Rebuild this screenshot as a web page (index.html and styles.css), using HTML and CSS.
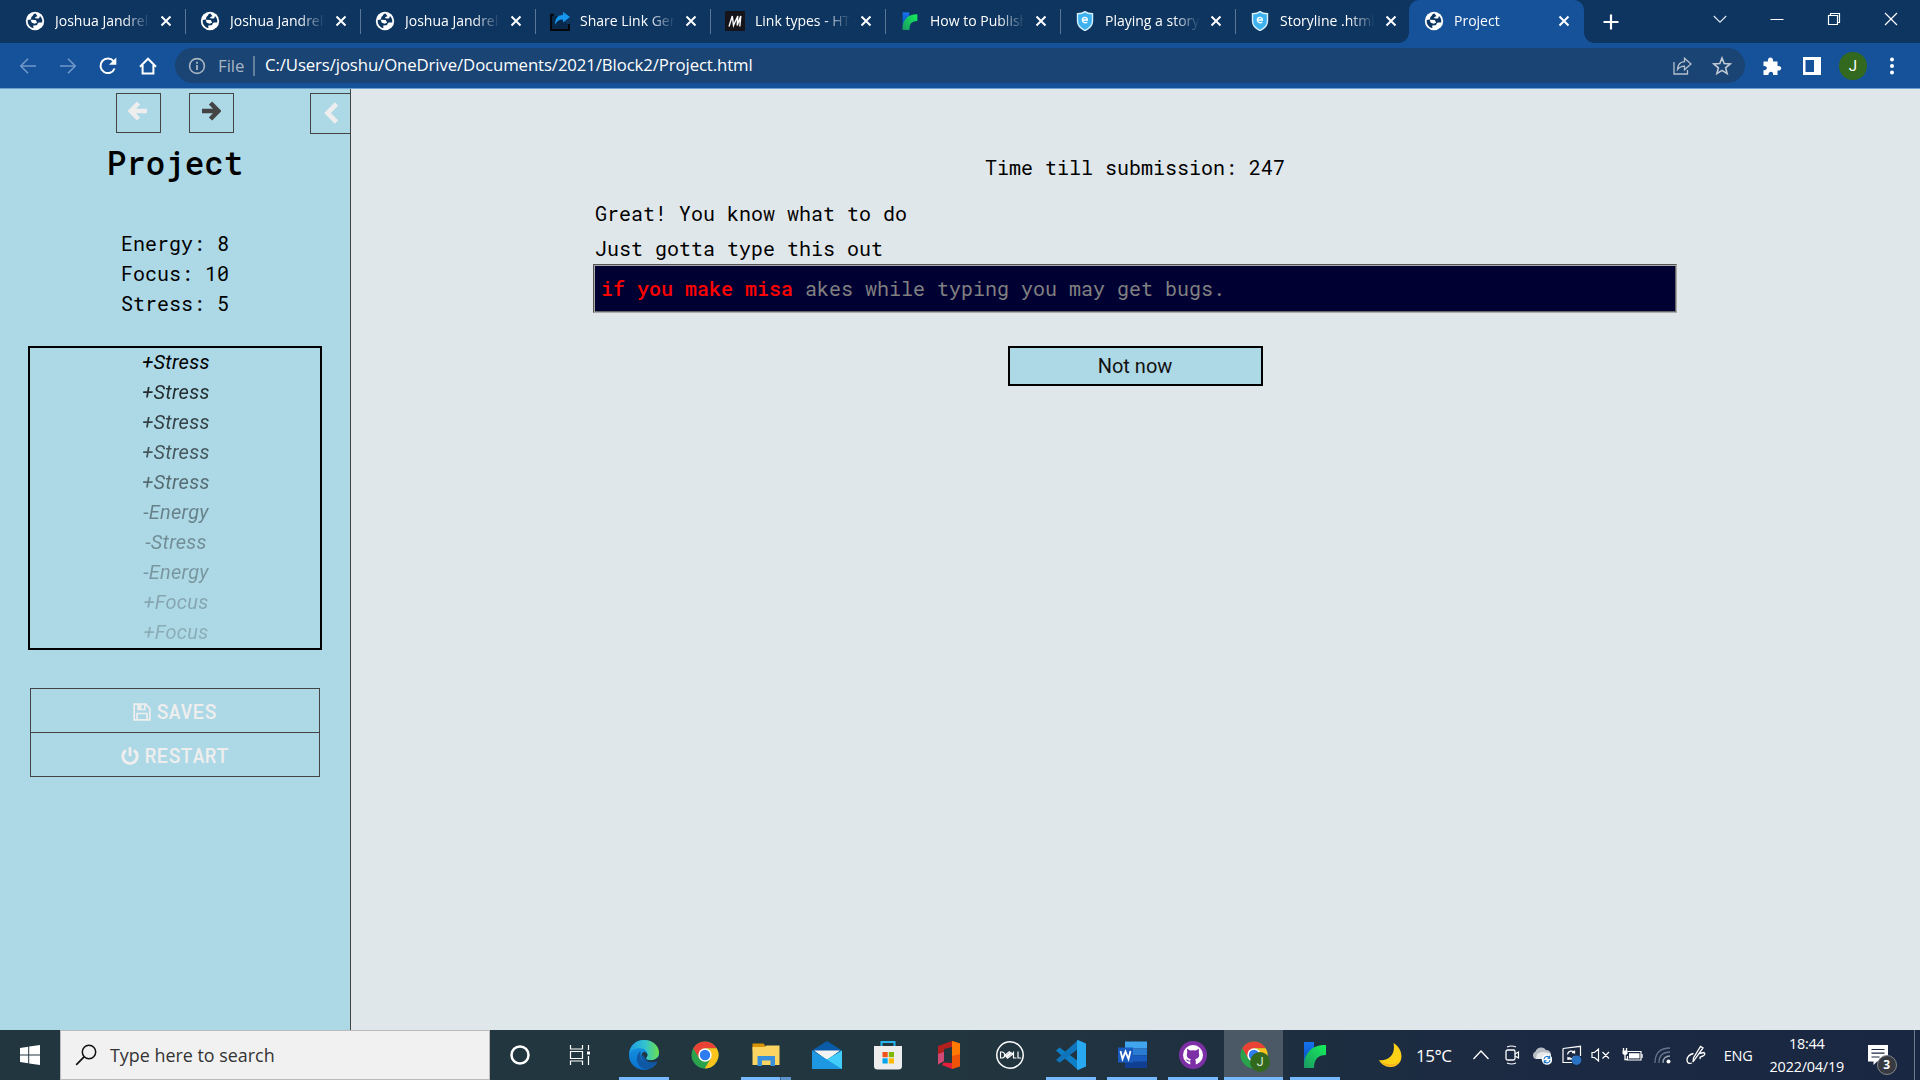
FILE: index.html
```html
<!DOCTYPE html>
<html lang="en">
<head>
<meta charset="utf-8">
<title>Project</title>
<link rel="stylesheet" href="styles.css">
</head>
<body>
<svg class="defs" aria-hidden="true">
  <symbol id="globe" viewBox="0 0 20 20"><circle cx="10" cy="10" r="9.2" fill="#fff"/><path d="M10.500 2.600C7.500 3 8.500 5 6.800 5.600 5.800 6.600 6.600 7.600 5.600 8.400L2.700 9a7.400 7.400 0 0 0 5.600 8.200c.5-1-.4-1.800 0-2.600l3.200-.3c1.300-.6.7-2.100 2-2.600 1.200-.4 2.400.1 3.700-.2A7.300 7.300 0 0 0 15 5c-.6.800-.2 2-1.300 2.500-1.400.4-2.200-.4-3.400-.1-.6-1.400.8-2 2.200-2.200z" fill="#0d3560"/><path d="M5.600 8.800l5 .2 1.600 2.400-2.400 1.300-3-1z" fill="#fff"/></symbol>
  <symbol id="x" viewBox="0 0 12 12"><path d="M1.500 1.500l9 9m0-9l-9 9" stroke="#fff" stroke-width="2" fill="none"/></symbol>
  <symbol id="shield" viewBox="0 0 20 20"><path d="M10 .6C12 2.300 15 2.800 17.500 2.800V10c0 4.500-3.300 7.500-7.500 9.600C5.800 17.500 2.500 14.500 2.500 10V2.800C5 2.800 8 2.300 10 .6z" fill="#3db2ef" stroke="#d5f0fc" stroke-width="1.400"/><path d="M7.500 9h4.800C12.300 5.500 7.400 5.600 7.400 9c0 3.200 3.500 3.300 4.800 2" fill="none" stroke="#fff" stroke-width="1.400"/></symbol>
  <symbol id="twine" viewBox="0 0 26 30"><linearGradient id="tb" x2="0" y2="1"><stop stop-color="#1673ee"/><stop offset=".5" stop-color="#0d5bd0"/><stop offset="1" stop-color="#16a268"/></linearGradient><linearGradient id="tg" x1="1" x2="0" y2="1"><stop stop-color="#15f05a"/><stop offset="1" stop-color="#1b9a63"/></linearGradient><path d="M2 2h10v26H2z" fill="url(#tb)"/><path d="M2 28C2 13 9 5 24 5v10C16 15 12 19 12 28z" fill="url(#tg)"/></symbol>
  <symbol id="chrome" viewBox="0 0 28 28"><circle cx="14" cy="14" r="13.500" fill="#2ba24c"/><path d="M2.300 7.200A13.500 13.500 0 0 1 25.700 7.300H14L8.200 17.300z" fill="#ea4335"/><path d="M25.700 7.300A13.500 13.500 0 0 1 13.800 27.500L19.800 17.300 19 9 14 7.300z" fill="#fcc31e"/><circle cx="14" cy="14" r="6.700" fill="#fff"/><circle cx="14" cy="14" r="5.200" fill="#2f7cf0"/></symbol>
</svg>

<header class="browser">
  <div class="tabstrip">
    <div class="tab"><svg class="fav"><use href="#globe"/></svg><span class="label">Joshua Jandrell</span><svg class="close"><use href="#x"/></svg></div>
    <div class="tab"><svg class="fav"><use href="#globe"/></svg><span class="label">Joshua Jandrell</span><svg class="close"><use href="#x"/></svg></div>
    <div class="tab"><svg class="fav"><use href="#globe"/></svg><span class="label">Joshua Jandrell</span><svg class="close"><use href="#x"/></svg></div>
    <div class="tab"><svg class="fav" viewBox="0 0 20 20"><path d="M4 4H1v15h18v-6" fill="none" stroke="#04080d" stroke-width="2.500"/><path d="M2 5h5l10 8v4H2z" fill="#07284b"/><path d="M5 14C5 7 8 4 13 4V.8L20 6l-7 5.500V8.500C9 8.500 7 10 5 14z" fill="#1597ee"/></svg><span class="label">Share Link Generator</span><svg class="close"><use href="#x"/></svg></div>
    <div class="tab"><svg class="fav" viewBox="0 0 20 20"><path d="M0 0h20v20H0z" fill="#15141a"/><path d="M4 15.500L7.300 5l1.200 9.500L12.800 5l-.6 9.500L15.800 5l-1 10.500" fill="none" stroke="#fff" stroke-width="1.400"/></svg><span class="label">Link types - HTML</span><svg class="close"><use href="#x"/></svg></div>
    <div class="tab"><svg class="fav"><use href="#twine"/></svg><span class="label">How to Publish Your</span><svg class="close"><use href="#x"/></svg></div>
    <div class="tab"><svg class="fav"><use href="#shield"/></svg><span class="label">Playing a story file</span><svg class="close"><use href="#x"/></svg></div>
    <div class="tab last"><svg class="fav"><use href="#shield"/></svg><span class="label">Storyline .html file</span><svg class="close"><use href="#x"/></svg></div>
    <div class="tab active"><svg class="fav"><use href="#globe"/></svg><span class="label">Project</span><svg class="close"><use href="#x"/></svg></div>
    <svg class="newtab" viewBox="0 0 16 16"><path d="M8 .5v15M.5 8h15" stroke="#fff" stroke-width="2.200"/></svg>
    <div class="window">
      <svg viewBox="0 0 14 14"><path d="M.8 4L7 10.200 13.200 4" fill="none" stroke="#dfe6ee" stroke-width="1.200"/></svg>
      <svg viewBox="0 0 14 14"><path d="M.5 7.500h13" stroke="#fff"/></svg>
      <svg viewBox="0 0 14 14"><path d="M1.500 3.500h9v9h-9zM3.500 3.500v-2h9v9h-2" fill="none" stroke="#fff" stroke-width="1.200"/></svg>
      <svg viewBox="0 0 14 14"><path d="M1 1l12 12M13 1L1 13" stroke="#fff" stroke-width="1.200"/></svg>
    </div>
  </div>
  <div class="toolbar">
    <svg class="nav" viewBox="0 0 20 20"><path d="M18 10H3M10 2.800L2.800 10l7.200 7.200" fill="none" stroke="#7099c8" stroke-width="1.600"/></svg>
    <svg class="nav" viewBox="0 0 20 20"><path d="M2 10h15M10 2.800L17.200 10 10 17.200" fill="none" stroke="#7099c8" stroke-width="1.600"/></svg>
    <svg class="nav" viewBox="0 0 20 20"><path d="M16.600 12.500A7.300 7.300 0 1 1 15.500 5.200" fill="none" stroke="#fff" stroke-width="2"/><path d="M18.300 1.500v7.300H11z" fill="#fff"/></svg>
    <svg class="nav" viewBox="0 0 20 20"><path d="M2 10.700L10 2.700l8 8M4.600 9v8.500h10.800V9" fill="none" stroke="#fff" stroke-width="2"/></svg>
    <div class="omnibox">
      <svg class="info" viewBox="0 0 18 18"><circle cx="9" cy="9" r="7.400" fill="none" stroke="#a9b5c2" stroke-width="1.600"/><path d="M9 8v5M9 4.800v1.900" stroke="#a9b5c2" stroke-width="1.800"/></svg>
      <span class="scheme">File</span>
      <span class="url">C:/Users/joshu/OneDrive/Documents/2021/Block2/Project.html</span>
      <svg class="act" viewBox="0 0 20 20"><path d="M2 6v12h13.500v-4M5.500 13.500c.3-5 3-7.500 7-7.800V2.200L19 8l-6.500 5.800V10.200c-3.200 0-5.200 1-7 3.300z" fill="none" stroke="#b7c0cb" stroke-width="1.300"/></svg>
      <svg class="act" viewBox="0 0 20 20"><path d="M10 2l2.200 5.500 6 .4-4.600 3.900 1.500 5.800L10 14.400l-5.100 3.200 1.500-5.800L1.800 7.900l6-.4z" fill="none" stroke="#c2cad3" stroke-width="1.600"/></svg>
    </div>
    <svg class="ext" viewBox="0 0 20 20"><path d="M1.500 5.500H6C4.800 0 12 0 11 5.500h4.500V10C20.500 9 20.500 15.500 15.500 14.500V19H11c1-4.500-5-4.500-4.500 0h-5v-4.700c4.500.5 4.500-5 0-4.300z" fill="#fff"/></svg>
    <svg class="ext" viewBox="0 0 20 20"><path d="M1 1h18v18H1zM3.500 4v12H12V4z" fill="#fff" fill-rule="evenodd"/></svg>
    <span class="avatar">J</span>
    <svg class="dots" viewBox="0 0 6 18"><g fill="#fff"><circle cx="3" cy="2.500" r="2"/><circle cx="3" cy="9" r="2"/><circle cx="3" cy="15.500" r="2"/></g></svg>
  </div>
</header>

<div class="page">
  <aside class="sidebar">
    <div class="history">
      <span class="hbtn"><svg viewBox="0 0 20 20"><path d="M19 10H4M10.500 2L2.800 10l7.700 8" fill="none" stroke="#eee" stroke-width="4.600"/></svg></span>
      <span class="hbtn"><svg viewBox="0 0 20 20"><path d="M1 10h15M9.500 2l7.700 8-7.700 8" fill="none" stroke="#444" stroke-width="4.600"/></svg></span>
      <span class="toggle"><svg viewBox="0 0 20 22"><path d="M14.500 2L5.500 11l9 9" fill="none" stroke="#eee" stroke-width="4.600"/></svg></span>
    </div>
    <h1>Project</h1>
    <div class="stats"><div>Energy: 8</div><div>Focus: 10</div><div>Stress: 5</div></div>
    <ul class="log">
      <li>+Stress</li><li>+Stress</li><li>+Stress</li><li>+Stress</li><li>+Stress</li>
      <li>-Energy</li><li>-Stress</li><li>-Energy</li><li>+Focus</li><li>+Focus</li>
    </ul>
    <ul class="menu">
      <li><svg viewBox="0 0 18 18"><path d="M1.200 1.200h11.500l4.100 4.100v11.500H1.200z M4 16.500v-6h10v6 M5 1.500v5h6.800v-5" fill="none" stroke="#eee" stroke-width="1.700"/><path d="M5 1h3.500v5.500H5z" fill="#eee"/></svg>SAVES</li>
      <li><svg viewBox="0 0 18 18"><path d="M5 3.300a7.200 7.200 0 1 0 8 0" fill="none" stroke="#eee" stroke-width="3"/><path d="M9 1.200v7" stroke="#eee" stroke-width="2.800" stroke-linecap="round"/></svg>RESTART</li>
    </ul>
  </aside>
  <main class="story">
    <div class="passage">
      <p class="timer">Time till submission: 247</p>
      <p class="line">Great! You know what to do</p>
      <p class="line second">Just gotta type this out</p>
      <div class="typing"><span class="typed">if you make misa</span><span class="rest"> akes while typing you may get bugs.</span></div>
      <button class="choice">Not now</button>
    </div>
  </main>
</div>

<footer class="taskbar">
  <div class="start"><svg viewBox="0 0 20 20"><path d="M0 3l8.200-1.200v7.700H0zM9.200 1.600L20 0v9.500H9.200zM0 10.500h8.200v7.800L0 17zM9.200 10.500H20V20L9.200 18.400z" fill="#fff"/></svg></div>
  <div class="search"><svg viewBox="0 0 22 22"><circle cx="14" cy="8" r="6.700" fill="none" stroke="#111" stroke-width="1.500"/><path d="M9.300 12.700L1.200 20.800" stroke="#111" stroke-width="1.700"/></svg><span>Type here to search</span></div>
  <div class="slot plain"><svg viewBox="0 0 30 30"><circle cx="15" cy="15" r="8.500" fill="none" stroke="#fff" stroke-width="2.500"/></svg></div>
  <div class="slot plain"><svg viewBox="0 0 30 30"><path d="M5.500 5v4h12V5M5.500 25v-4h12v4M5.500 11.500h12v7h-12zM23.500 5v5M23.500 16v9" fill="none" stroke="#fff" stroke-width="1.200"/><path d="M22 11.500h3v3h-3z" fill="#fff"/></svg></div>
  <div class="slot first"><svg viewBox="0 0 30 30"><defs><linearGradient id="e1"><stop stop-color="#1d9be5"/><stop offset=".55" stop-color="#34c3ce"/><stop offset="1" stop-color="#6be04b"/></linearGradient><linearGradient id="e2" x2="0" y2="1"><stop stop-color="#1b9ae4"/><stop offset="1" stop-color="#0871cf"/></linearGradient></defs><circle cx="15" cy="15" r="15" fill="url(#e2)"/><path d="M0 14C1 5 7 0 15 0c9 0 15 6 15 12.500 0 5-4 7.700-8 7.700-3.500 0-5-1-5-2 0-.8 1.500-1.500 1.500-4 0-3-3-6-7.500-6C6 8.200 1.500 10 0 14z" fill="url(#e1)"/><path d="M11.500 11C4.500 17 8 28.500 18 29.700c4-.9 8-3.700 9.800-7.200-7 4-16-.3-16.300-6z" fill="#1058a4"/><path d="M17 18.200c0 1 1.500 2 5 2 3 0 6-1.300 7.400-4.200L30 20l-2.200 2.500C21 26 13 22 12.500 16c0-2 1-3.500 2.500-4.300 2 .5 3.500 2 3.500 3.300 0 1.600-1.500 2.400-1.500 3.200z" fill="#20333e"/><path d="M12.500 16C12 22 19 26.500 27.800 22.500c.6-.9.300-1.300-.4-1C20 24 15.500 20 15 15z" fill="#1058a4"/></svg><i class="run"></i></div>
  <div class="slot"><svg class="chrome-lg"><use href="#chrome"/></svg></div>
  <div class="slot multi"><svg viewBox="0 0 30 30"><path d="M1.500 3.500h11l2 2.500v5h-13z" fill="#d99405"/><path d="M1.500 7h12l2-1.500h13V25h-27z" fill="#fcd462"/><path d="M6.500 26V16h17.500v10h-4.500v-5.500h-8.500V26z" fill="#3990da"/></svg><i class="run"></i></div>
  <div class="slot"><svg viewBox="0 0 30 30"><path d="M0 10.500L15 1l15 9.500-15 8z" fill="#0a5ba8"/><path d="M2 10.500h26L15 20z" fill="#f3f3f3"/><path d="M0 10.500l15 9 15-9V29H0z" fill="#2ab0ef"/><path d="M0 29V10.500L30 29z" fill="#1e97e2"/><path d="M15 19.500l15-9V29z" fill="#41cdf7"/></svg></div>
  <div class="slot"><svg viewBox="0 0 30 30"><path d="M8.500 7V2h13v5" fill="none" stroke="#25b6ee" stroke-width="2"/><path d="M1 6h28v20q0 3.500-3.500 3.500h-21Q1 29.500 1 26z" fill="#ededed"/><path d="M9.500 12h5.200v5.200H9.500z" fill="#f1511b"/><path d="M15.800 12H21v5.200h-5.200z" fill="#80b900"/><path d="M9.500 18.300h5.200v5.200H9.500z" fill="#00a4ef"/><path d="M15.800 18.300H21v5.200h-5.200z" fill="#fbb900"/></svg></div>
  <div class="slot"><svg viewBox="0 0 30 30"><path d="M4 6L18 1v6l-8 2v12l-6 3.500z" fill="#b3201d"/><path d="M4 14l6-2v9l-6 3.500z" fill="#cf4a75"/><path d="M18 1l8 2.500v23L18 29z" fill="#ee5307"/><path d="M18 1l8 2.500V14l-8 2z" fill="#ff7a05"/><path d="M8 25l1.500-2.500L18 23v6z" fill="#e1203a"/></svg></div>
  <div class="slot"><svg viewBox="0 0 30 30"><circle cx="15" cy="15" r="13.200" fill="none" stroke="#fff" stroke-width="1.500"/><path d="M5.500 12v6h1.800q2.400-.4 2.400-3t-2.400-3zM9.800 15.200l4.500-3.500 1.200 1-4 3 1 .7 4.300-3.300 1.200 1-5.500 4.200zM18.500 11.500v6.500h3M23 11.500v6.500h3" fill="none" stroke="#fff" stroke-width="1.200"/></svg></div>
  <div class="slot"><svg viewBox="0 0 30 30"><path d="M0 10.500L3.500 7.500 24 22.500 22 30z" fill="#0e7fc7"/><path d="M0 20L3.500 22.800 24 7.500 22 0z" fill="#0f74bb"/><path d="M22 0l8 3.500v23L22 30q-1.500-.5-1-2V2q-.5-1.500 1-2z" fill="#29a8f2"/></svg><i class="run"></i></div>
  <div class="slot"><svg viewBox="0 0 30 30"><path d="M8 1.500h22v7H8z" fill="#41a5ee"/><path d="M8 8.500h22v6.700H8z" fill="#2b7cd3"/><path d="M8 15.200h22v6.600H8z" fill="#185abd"/><path d="M8 21.800h22V28H8z" fill="#103f91"/><path d="M1 7.500h15v15H1z" fill="#185abd"/><path d="M3.500 11l2 8L8.500 11.500l3 7.500 2-8" fill="none" stroke="#fff" stroke-width="1.800"/></svg><i class="run"></i></div>
  <div class="slot"><svg viewBox="0 0 30 30"><circle cx="15" cy="15" r="14" fill="#7d2fa5"/><circle cx="15" cy="15" r="10" fill="#fff"/><path d="M12.300 25v-3.500c-3 .6-3.700-1.500-4.700-2.200 2-.3 2.500 1.800 4.700 1.300l.5-1.400C9.500 18.500 8 16.500 9.200 12.500L9 8.800l3.300 1.600q2.700-.5 5.400 0L21 8.800l-.2 3.700c1.200 4-.3 6-3.600 6.700q.6.800.6 2V25z" fill="#7d2fa5"/></svg><i class="run"></i></div>
  <div class="slot focus"><svg class="chrome-lg"><use href="#chrome"/></svg><b class="badge">J</b><i class="run"></i></div>
  <div class="slot"><svg viewBox="0 0 30 30"><use href="#twine" x="2" y="0" width="26" height="30"/></svg><i class="run"></i></div>
  <div class="tray">
    <svg class="moon" viewBox="0 0 24 24"><path d="M14.500 0C26 7 25 23 12 24 7 24.200 2 21.500 0 17c9 1.500 17-5 14.500-17z" fill="#fcd116"/><path d="M1 18.500c4 5 14 7 19.500 0-5 4-12 4-19.500 0z" fill="#f7a823"/></svg>
    <span class="temp">15°C</span>
    <svg class="t up" viewBox="0 0 20 20"><path d="M2.500 14L10 6l7.500 8" fill="none" stroke="#fff" stroke-width="1.300"/></svg>
    <svg class="t" viewBox="0 0 20 20"><rect x="4" y="5" width="9" height="10" rx="1.500" fill="none" stroke="#fff" stroke-width="1.300"/><path d="M13 9l3.500-2v6L13 11M5 2q4.500-2 9 0M5 18q4.500 2 9 0" fill="none" stroke="#fff" stroke-width="1.200"/></svg>
    <svg class="t" viewBox="0 0 20 20"><path d="M3.500 14a4 4 0 0 1 0-7.500A6 6 0 0 1 14 5q4.500 0 5 4.500v4.500z" fill="#b8bcc3"/><path d="M5 9q6-4 14 0v5H4z" fill="#e7e8ea"/><circle cx="15" cy="14.500" r="5.200" fill="#fff"/><path d="M12 14.200a3 3 0 0 1 5.500-1.500M18 15a3 3 0 0 1-5.500 1.500M17.700 10.800v2.400h-2.400M12.300 18.200v-2.400h2.400" fill="none" stroke="#1572c6" stroke-width="1.100"/></svg>
    <svg class="t" viewBox="0 0 20 20"><path d="M1 3.500l17.500-2.200V11M1 3.500v14h9" fill="none" stroke="#fff" stroke-width="1.200"/><path d="M5.500 9.500a4 4 0 0 1 7-2v-2M12.500 7.500H10M12.500 11a4 4 0 0 1-6.500 2v2M6 13h2.500" fill="none" stroke="#fff" stroke-width="1.300"/><circle cx="14.500" cy="15.200" r="4.800" fill="#2a72c4"/></svg>
    <svg class="t" viewBox="0 0 20 20"><path d="M1 7.500h2.500L7.500 4v12l-4-3.500H1zM11.500 7l6.500 6.500M18 7l-6.500 6.500" fill="none" stroke="#fff" stroke-width="1.200"/></svg>
    <svg class="t bat" viewBox="0 0 22 20"><path d="M6.500 6.500H20v8.500H6.500V11" fill="none" stroke="#fff" stroke-width="1.200"/><path d="M8 8.200h10.500v5.200H8z" fill="#fff"/><path d="M21 9v4M2.500 3v3M5.500 3v3M4 9.500v5h2.500" stroke="#fff" stroke-width="1.300" fill="none"/><path d="M1.500 5.500h5v3.200q-2.500 2.500-5 0z" fill="#fff"/></svg>
    <svg class="t" viewBox="0 0 20 20"><g fill="none" stroke="#68758b" stroke-width="1.300"><path d="M2 18Q2 3 17 3"/><path d="M6 18Q6 7 17 7"/><path d="M10 18q0-7 7-7" stroke="#9aa4b4"/></g><circle cx="15.500" cy="16.500" r="2" fill="#fff"/></svg>
    <svg class="t pen" viewBox="0 0 20 20"><path d="M9 14L7 17l.5-4L14.500 1.500l2.500 1.500zM7.500 8.500Q1 10 1 15.500q.5 4 5 2.500M13 8.500l5-1q2 2-1 3.500-4.500 1-2.500 3" fill="none" stroke="#fff" stroke-width="1.300"/></svg>
    <span class="lang">ENG</span>
    <div class="clock"><span>18:44</span><span>2022/04/19</span></div>
    <div class="notif"><svg viewBox="0 0 20 20"><path d="M0 0h20v16.500H9L5.500 20v-3.500H0z" fill="#fff"/><path d="M3.500 4.500h13M3.500 8.200h13M3.500 12h8" stroke="#1a2a42" stroke-width="1.200"/></svg><b>3</b></div>
  </div>
</footer>
</body>
</html>
```
FILE: styles.css
```css
* { box-sizing: border-box; }
body {
  margin: 0;
  width: 1920px;
  height: 1080px;
  overflow: hidden;
  display: flex;
  flex-direction: column;
  font-family: "Open Sans", "Noto Sans", sans-serif;
}
svg { display: block; flex: none; }
.defs { position: absolute; width: 0; height: 0; }
ul, p, h1 { margin: 0; padding: 0; list-style: none; }

/* Browser chrome */
.browser { height: 89px; flex: none; background: #15529a; border-bottom: 1px solid #6ba0d0; }
.tabstrip { height: 43px; background: #0d3560; display: flex; align-items: center; padding-left: 10px; }
.tab {
  width: 175px; height: 43px; flex: none;
  display: flex; align-items: center;
  padding: 0 14px 1px 15px;
  color: #fff; font-size: 14px;
  position: relative;
}
.tab::after { content: ""; position: absolute; right: -1px; top: 9px; width: 1px; height: 25px; background: #5a7795; }
.tab.last::after { display: none; }
.fav { width: 20px; height: 20px; margin-right: 10px; }
.label {
  width: 95px; overflow: hidden; white-space: nowrap; line-height: 24px;
  -webkit-mask-image: linear-gradient(90deg, #000 72%, transparent 100%);
  mask-image: linear-gradient(90deg, #000 72%, transparent 100%);
}
.close { width: 12px; height: 12px; margin-left: auto; }
.tab .close { margin-right: -1px; }
.tab.active { background: #15529a; border-radius: 10px 10px 0 0; margin-left: -1px; }
.tab.active .close { margin-right: 0; }
.tab.active::before, .tab.active::after {
  content: ""; position: absolute; top: 33px; width: 10px; height: 10px;
}
.tab.active::before { left: -10px; background: radial-gradient(circle at 0 0, #0d3560 9.500px, #15529a 10px); }
.tab.active::after { right: -10px; background: radial-gradient(circle at 100% 0, #0d3560 9.500px, #15529a 10px); }
.newtab { width: 16px; height: 16px; margin-left: 19px; }
.window { margin-left: auto; display: flex; gap: 43px; padding: 0 22px 5px 0; }
.window svg { width: 14px; height: 14px; }
.toolbar { height: 45px; display: flex; align-items: center; padding-left: 18px; }
.nav { width: 20px; height: 20px; margin-right: 20px; }
.omnibox {
  width: 1570px; height: 35px; border-radius: 18px; background: #1a4474;
  display: flex; align-items: center; padding: 0 13px 0 13px; margin-left: -3px;
  font-size: 16.750px; color: #fff;
}
.info { width: 18px; height: 18px; }
.scheme { color: #a9b5c2; margin-left: 12px; padding-right: 9px; border-right: 2px solid #67809c; line-height: 20px; width: 37px; }
.url { margin: 0 auto 0 10px; letter-spacing: -.1px; position: relative; top: -1px; }
.act { width: 20px; height: 20px; margin-left: 20px; }
.ext { width: 20px; height: 20px; margin-left: 17px; }
.ext + .ext { margin-left: 20px; }
.avatar {
  width: 28px; height: 28px; border-radius: 50%; background: #33691e; color: #fff;
  font: 15px/28px Roboto, sans-serif; text-align: center; margin-left: 17px;
}
.dots { width: 6px; height: 18px; margin-left: 22px; }

/* Story page */
.page { height: 941px; flex: none; display: flex; background: #e0e7ea; }
.sidebar { width: 351px; background: #add8e6; border-right: 1px solid #444; }
.history { display: flex; height: 45px; padding: 4px 0 0 116px; }
.hbtn, .toggle { width: 45px; height: 40px; border: 1px solid #444; display: flex; align-items: center; justify-content: center; flex: none; }
.hbtn { margin-right: 28px; padding: 0 1px 4px 0; }
.hbtn svg { width: 20px; height: 20px; }
.toggle { width: 40px; height: 41px; border-right: 0; margin-left: 48px; padding: 0 0 1px 2px; }
.toggle svg { width: 20px; height: 22px; }
h1, .stats, .story { font-family: "Roboto Mono", "Liberation Mono", monospace; color: #000; }
h1 { font-size: 32.500px; font-weight: 500; line-height: 48px; text-align: center; margin-top: 5px; }
.stats { margin-top: 41px; font-size: 20px; line-height: 30px; text-align: center; }
.log {
  margin: 28px auto 0; width: 294px; height: 304px; border: 2px solid #000;
  font: italic 20px/30px Roboto, sans-serif; text-align: center; padding-left: 2px; letter-spacing: .25px;
}
.log li { position: relative; top: -1px; }
.log li:nth-child(2) { opacity: .8; }
.log li:nth-child(3) { opacity: .7; }
.log li:nth-child(4) { opacity: .6; }
.log li:nth-child(5) { opacity: .5; }
.log li:nth-child(6) { opacity: .4; }
.log li:nth-child(7) { opacity: .34; }
.log li:nth-child(8) { opacity: .3; }
.log li:nth-child(9) { opacity: .23; }
.log li:nth-child(10) { opacity: .2; }
.menu { margin: 38px auto 0; width: 290px; border: 1px solid #444; color: #eee; font: 500 20px/43px "Roboto Mono", Roboto, sans-serif; }
.menu li { display: flex; justify-content: center; align-items: center; height: 43px; gap: 5px; padding-top: 2px; }
.menu li + li { border-top: 1px solid #444; height: 44px; }
.menu svg { width: 18px; height: 18px; }
.story { flex: 1; }
.passage { width: 1084px; margin-left: 242px; padding-top: 63px; font-size: 20px; line-height: 30px; display: flex; flex-direction: column; }
.timer { text-align: center; }
.line { margin-top: 16px; padding-left: 2px; }
.line.second { margin-top: 5px; }
.typing {
  height: 49px; background: #000033; margin-top: 1px;
  border: 1px solid; border-color: #555 #aaa #aaa #555;
  box-shadow: inset 1px 1px #aaa, inset -1px -1px #666;
  padding-left: 7px; line-height: 46px; color: #808080; white-space: pre;
}
.typed { color: #f00; font-weight: 500; }
.choice {
  align-self: center; width: 255px; height: 40px; margin-top: 33px; padding: 0;
  background: #add8e6; border: 2px solid #000; color: #111; font: 20px/36px Roboto, sans-serif;
}

/* Windows taskbar */
.taskbar { height: 50px; flex: none; display: flex; background: linear-gradient(90deg, #22363f 0, #22363f 50%, #1b2942 80%, #1a2742 100%); color: #fff; }
.start { width: 60px; display: flex; align-items: center; justify-content: center; }
.start svg { width: 20px; height: 20px; }
.search { width: 430px; background: #f1f1f1; border: 1px solid #bbb; display: flex; align-items: center; color: #333; font-size: 17.900px; padding-left: 14px; }
.search svg { width: 22px; height: 22px; margin-right: 13px; }
.slot { width: 61px; display: flex; align-items: center; justify-content: center; position: relative; }
.slot.plain { width: 60px; }
.slot.first { margin-left: 3px; }
.slot svg { width: 30px; height: 30px; }
.slot svg.chrome-lg { width: 28px; height: 28px; }
.run { position: absolute; bottom: 0; left: 50%; width: 50px; margin-left: -25px; height: 3px; background: #76b9ff; }
.multi .run { background: linear-gradient(90deg, #76b9ff 39px, #3f6185 39px, #3f6185 40px, #5d94ce 40px); }
.focus { background: #4b5966; width: 59px; margin: 0 1px; }
.focus .run { width: 59px; margin-left: -29.500px; }
.badge { position: absolute; left: 26px; top: 22px; width: 20px; height: 20px; border-radius: 50%; background: #33691e; color: #d9e3d3; font: 13px/20px Roboto, sans-serif; text-align: center; }
.tray { margin-left: auto; display: flex; align-items: center; width: 543px; border-right: 1px solid #6f7a8b; margin-right: 5px; }
.moon { width: 24px; height: 24px; margin-left: 7px; }
.temp { font-size: 17px; width: 51px; margin-left: 13px; letter-spacing: -.5px; white-space: nowrap; }
.t { width: 20px; height: 20px; margin: 0 9.800px 0 0; }
.t.up { margin: 0 11px 0 4px; }
.t.bat { width: 22px; }
.t.pen { margin: 0 0 0 3px; }
.lang { font-size: 14.500px; margin-left: 18px; letter-spacing: -.3px; width: 40px; }
.clock { display: flex; flex-direction: column; align-items: center; font-size: 14.400px; line-height: 23px; width: 86px; letter-spacing: -.2px; }
.notif { position: relative; margin-left: 18px; width: 20px; height: 20px; }
.notif svg { width: 20px; height: 20px; }
.notif b { position: absolute; left: 9px; top: 10px; width: 20px; height: 20px; border-radius: 50%; background: #373a40; border: 1px solid #83878c; font-size: 12px; line-height: 18px; text-align: center; }
```
